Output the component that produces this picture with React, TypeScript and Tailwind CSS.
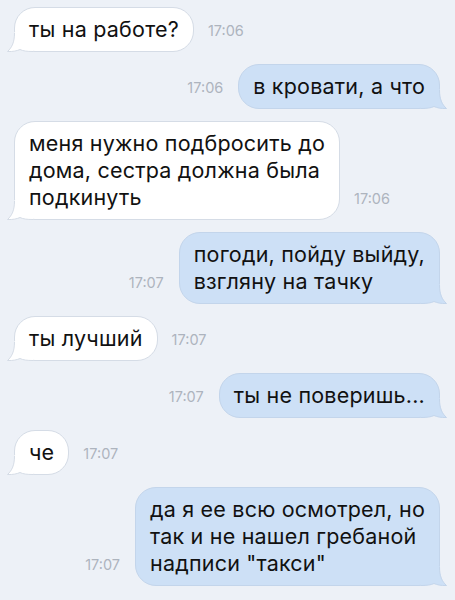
import React from "react";

type Msg = {
  out: boolean;
  lines: string[];
  time: string;
};

const messages: Msg[] = [
  { out: false, lines: ["ты на работе?"], time: "17:06" },
  { out: true, lines: ["в кровати, а что"], time: "17:06" },
  {
    out: false,
    lines: ["меня нужно подбросить до", "дома, сестра должна была", "подкинуть"],
    time: "17:06",
  },
  { out: true, lines: ["погоди, пойду выйду,", "взгляну на тачку"], time: "17:07" },
  { out: false, lines: ["ты лучший"], time: "17:07" },
  { out: true, lines: ["ты не поверишь..."], time: "17:07" },
  { out: false, lines: ["че"], time: "17:07" },
  {
    out: true,
    lines: ["да я ее всю осмотрел, но", "так и не нашел гребаной", 'надписи "такси"'],
    time: "17:07",
  },
];

function Tail({ out }: { out: boolean }) {
  const fill = out ? "#cde0f6" : "#ffffff";
  const stroke = out ? "#c3d5eb" : "#d5dce6";
  return (
    <svg
      width="26"
      height="20"
      viewBox="0 0 26 20"
      className={out ? "absolute -right-[8px] -bottom-[1px] -scale-x-100" : "absolute -left-[8px] -bottom-[1px]"}
    >
      <path
        d="M7.5 0 C7.5 10 5 15.5 0.5 19.5 C6 19.8 10 18.8 13 17.5 C16 19 20 19.5 26 19.5 L26 0 Z"
        fill={fill}
      />
      <path
        d="M7.5 1 C7.5 10 5 15.5 0.5 19.5 C6 19.8 10 18.8 13 17.5 C16 19 20 19.5 26 19.5"
        fill="none"
        stroke={stroke}
        strokeWidth="1"
      />
    </svg>
  );
}

function Time({ value }: { value: string }) {
  return (
    <span className="mb-[13px] shrink-0 text-[14.5px] leading-[16px] text-[#adb4be]">{value}</span>
  );
}

function Bubble({ msg }: { msg: Msg }) {
  return (
    <div
      className={
        msg.out
          ? "relative rounded-[21px] border border-[#c3d5eb] bg-[#cde0f6] px-[14px] py-[8px]"
          : "relative rounded-[21px] border border-[#d5dce6] bg-white px-[14px] py-[8px]"
      }
    >
      <Tail out={msg.out} />
      <div className="relative whitespace-nowrap text-[21.5px] leading-[27px] tracking-[0.2px] text-[#111111]">
        {msg.lines.map((l, i) => (
          <div key={i}>{l}</div>
        ))}
      </div>
    </div>
  );
}

export default function App() {
  return (
    <div
      className="flex h-[600px] w-[455px] flex-col gap-[12px] overflow-hidden bg-[#edf1f7] pl-[14px] pr-[15px] pt-[7px]"
      style={{ fontFamily: "Inter, 'Noto Sans', sans-serif" }}
    >
      {messages.map((m, i) =>
        m.out ? (
          <div key={i} className="flex items-end justify-end gap-[15px]">
            <Time value={m.time} />
            <Bubble msg={m} />
          </div>
        ) : (
          <div key={i} className="flex items-end gap-[14px]">
            <Bubble msg={m} />
            <Time value={m.time} />
          </div>
        ),
      )}
    </div>
  );
}
